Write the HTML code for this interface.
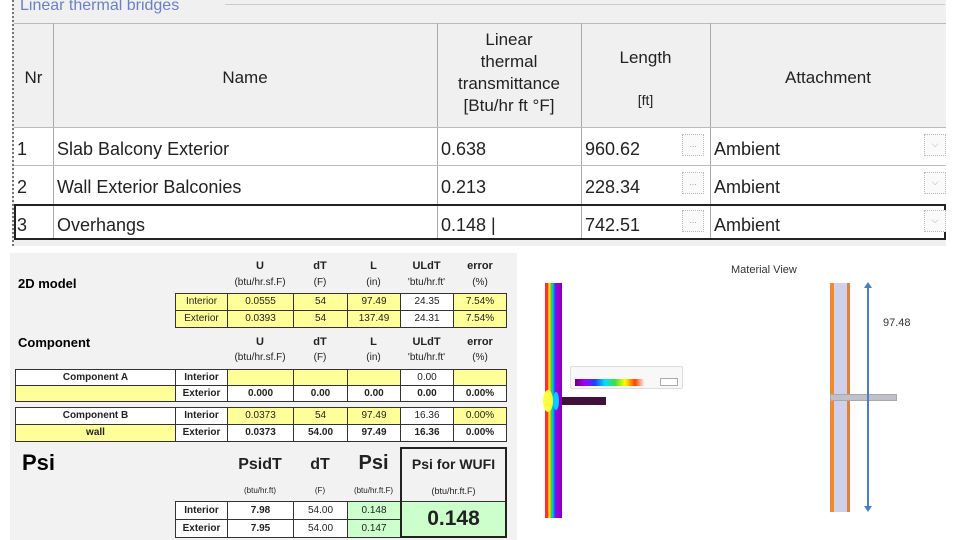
<!DOCTYPE html>
<html><head><meta charset="utf-8"><style>
*{margin:0;padding:0;box-sizing:border-box}
body{width:960px;height:540px;background:#fff;position:relative;overflow:hidden;font-family:"Liberation Sans",Arial,sans-serif}
.a{position:absolute}
.t{color:#222;font-size:18px}
.h{font-size:17px;color:#222;text-align:center;position:absolute;line-height:22px}
.c{position:absolute;border:1px solid #333;font-size:10px;text-align:center;line-height:15px;color:#222}
.y{background:#ffff99}
.w{background:#fff}
.g{background:#ccffcc}
.lb{position:absolute;font-size:10px;text-align:center;color:#222;font-weight:bold}
.un{position:absolute;font-size:10px;text-align:center;color:#222}
.btn{position:absolute;width:22px;height:22px;border:1px dotted #bbb;background:#fafafa;color:#aaa;font-size:9px;text-align:center;line-height:18px}
</style></head><body>
<div class="a" style="left:12px;top:0;width:934px;height:246px;background:#f0f0f0;border-left:2px dotted #777"></div>
<div class="a" style="left:20px;top:-3px;font-size:16px;color:#6a7fc8">Linear thermal bridges</div>
<div class="a" style="left:225px;top:4px;width:720px;height:1px;background:#ccc"></div>
<div class="a" style="left:14px;top:23px;width:932px;height:1px;background:#bbb"></div>
<div class="a" style="left:14px;top:127px;width:932px;height:113px;background:#fff"></div>
<div class="a" style="left:53px;top:23px;width:1px;height:217px;background:#aaa"></div>
<div class="a" style="left:437px;top:23px;width:1px;height:217px;background:#aaa"></div>
<div class="a" style="left:581px;top:23px;width:1px;height:217px;background:#aaa"></div>
<div class="a" style="left:710px;top:23px;width:1px;height:217px;background:#aaa"></div>
<div class="a" style="left:14px;top:127px;width:932px;height:1px;background:#bbb"></div>
<div class="a" style="left:14px;top:165px;width:932px;height:1px;background:#bbb"></div>
<div class="a" style="left:14px;top:204px;width:932px;height:36px;border:2px solid #222"></div>
<div class="h" style="left:14px;top:67px;width:39px">Nr</div>
<div class="h" style="left:53px;top:67px;width:384px">Name</div>
<div class="h" style="left:437px;top:29px;width:144px">Linear<br>thermal<br>transmittance<br>[Btu/hr ft °F]</div>
<div class="h" style="left:581px;top:47px;width:129px">Length</div>
<div class="h" style="left:581px;top:89px;width:129px;font-size:14px">[ft]</div>
<div class="h" style="left:710px;top:67px;width:236px">Attachment</div>
<div class="a t" style="left:17px;top:139px">1</div><div class="a t" style="left:57px;top:139px">Slab Balcony Exterior</div><div class="a t" style="left:441px;top:139px">0.638</div><div class="a t" style="left:585px;top:139px">960.62</div><div class="a t" style="left:714px;top:139px">Ambient</div>
<div class="a t" style="left:17px;top:177px">2</div><div class="a t" style="left:57px;top:177px">Wall Exterior Balconies</div><div class="a t" style="left:441px;top:177px">0.213</div><div class="a t" style="left:585px;top:177px">228.34</div><div class="a t" style="left:714px;top:177px">Ambient</div>
<div class="a t" style="left:17px;top:215px">3</div><div class="a t" style="left:57px;top:215px">Overhangs</div><div class="a t" style="left:441px;top:215px">0.148 |</div><div class="a t" style="left:585px;top:215px">742.51</div><div class="a t" style="left:714px;top:215px">Ambient</div>
<div class="btn" style="left:682px;top:134px">...</div><div class="btn" style="left:682px;top:172px">...</div><div class="btn" style="left:682px;top:210px">...</div>
<div class="btn" style="left:924px;top:134px">⌵</div><div class="btn" style="left:924px;top:172px">⌵</div><div class="btn" style="left:924px;top:210px">⌵</div>

<div class="a" style="left:10px;top:253px;width:507px;height:287px;background:#f2f2f2"></div>
<div class="a" style="left:18px;top:276px;font-size:13px;font-weight:bold">2D model</div>
<div class="a" style="left:18px;top:335px;font-size:13px;font-weight:bold">Component</div>
<div class="lb" style="left:227px;top:260px;width:66px;font-size:11px">U</div><div class="lb" style="left:293px;top:260px;width:54px;font-size:11px">dT</div><div class="lb" style="left:347px;top:260px;width:53px;font-size:11px">L</div><div class="lb" style="left:400px;top:260px;width:53px;font-size:11px">ULdT</div><div class="lb" style="left:453px;top:260px;width:54px;font-size:11px">error</div>
<div class="un" style="left:227px;top:277px;width:66px">(btu/hr.sf.F)</div><div class="un" style="left:293px;top:277px;width:54px">(F)</div><div class="un" style="left:347px;top:277px;width:53px">(in)</div><div class="un" style="left:400px;top:277px;width:53px">'btu/hr.ft'</div><div class="un" style="left:453px;top:277px;width:54px">(%)</div>
<div class="c y" style="left:175px;top:293px;width:53px;height:18px">Interior</div><div class="c y" style="left:227px;top:293px;width:67px;height:18px">0.0555</div><div class="c y" style="left:293px;top:293px;width:55px;height:18px">54</div><div class="c y" style="left:347px;top:293px;width:54px;height:18px">97.49</div><div class="c w" style="left:400px;top:293px;width:54px;height:18px">24.35</div><div class="c y" style="left:453px;top:293px;width:54px;height:18px">7.54%</div>
<div class="c y" style="left:175px;top:310px;width:53px;height:18px">Exterior</div><div class="c y" style="left:227px;top:310px;width:67px;height:18px">0.0393</div><div class="c y" style="left:293px;top:310px;width:55px;height:18px">54</div><div class="c y" style="left:347px;top:310px;width:54px;height:18px">137.49</div><div class="c w" style="left:400px;top:310px;width:54px;height:18px">24.31</div><div class="c y" style="left:453px;top:310px;width:54px;height:18px">7.54%</div>
<div class="lb" style="left:227px;top:336px;width:66px;font-size:11px">U</div><div class="lb" style="left:293px;top:336px;width:54px;font-size:11px">dT</div><div class="lb" style="left:347px;top:336px;width:53px;font-size:11px">L</div><div class="lb" style="left:400px;top:336px;width:53px;font-size:11px">ULdT</div><div class="lb" style="left:453px;top:336px;width:54px;font-size:11px">error</div>
<div class="un" style="left:227px;top:352px;width:66px">(btu/hr.sf.F)</div><div class="un" style="left:293px;top:352px;width:54px">(F)</div><div class="un" style="left:347px;top:352px;width:53px">(in)</div><div class="un" style="left:400px;top:352px;width:53px">'btu/hr.ft'</div><div class="un" style="left:453px;top:352px;width:54px">(%)</div>
<div class="c w" style="left:15px;top:369px;width:161px;height:17px;font-weight:bold">Component A</div><div class="c w" style="left:175px;top:369px;width:53px;height:17px;font-weight:bold">Interior</div><div class="c y" style="left:227px;top:369px;width:67px;height:17px"></div><div class="c y" style="left:293px;top:369px;width:55px;height:17px"></div><div class="c y" style="left:347px;top:369px;width:54px;height:17px"></div><div class="c w" style="left:400px;top:369px;width:54px;height:17px">0.00</div><div class="c y" style="left:453px;top:369px;width:54px;height:17px"></div>
<div class="c y" style="left:15px;top:385px;width:161px;height:17px"></div><div class="c w" style="left:175px;top:385px;width:53px;height:17px;font-weight:bold">Exterior</div><div class="c w" style="left:227px;top:385px;width:67px;height:17px;font-weight:bold">0.000</div><div class="c w" style="left:293px;top:385px;width:55px;height:17px;font-weight:bold">0.00</div><div class="c w" style="left:347px;top:385px;width:54px;height:17px;font-weight:bold">0.00</div><div class="c w" style="left:400px;top:385px;width:54px;height:17px;font-weight:bold">0.00</div><div class="c w" style="left:453px;top:385px;width:54px;height:17px;font-weight:bold">0.00%</div>
<div class="c w" style="left:15px;top:407px;width:161px;height:18px;font-weight:bold">Component B</div><div class="c w" style="left:175px;top:407px;width:53px;height:18px;font-weight:bold">Interior</div><div class="c y" style="left:227px;top:407px;width:67px;height:18px">0.0373</div><div class="c y" style="left:293px;top:407px;width:55px;height:18px">54</div><div class="c y" style="left:347px;top:407px;width:54px;height:18px">97.49</div><div class="c w" style="left:400px;top:407px;width:54px;height:18px">16.36</div><div class="c y" style="left:453px;top:407px;width:54px;height:18px">0.00%</div>
<div class="c y" style="left:15px;top:424px;width:161px;height:18px;font-weight:bold">wall</div><div class="c w" style="left:175px;top:424px;width:53px;height:18px;font-weight:bold">Exterior</div><div class="c w" style="left:227px;top:424px;width:67px;height:18px;font-weight:bold">0.0373</div><div class="c w" style="left:293px;top:424px;width:55px;height:18px;font-weight:bold">54.00</div><div class="c w" style="left:347px;top:424px;width:54px;height:18px;font-weight:bold">97.49</div><div class="c w" style="left:400px;top:424px;width:54px;height:18px;font-weight:bold">16.36</div><div class="c w" style="left:453px;top:424px;width:54px;height:18px;font-weight:bold">0.00%</div>
<div class="a" style="left:22px;top:450px;font-size:22px;font-weight:bold">Psi</div>
<div class="lb" style="left:227px;top:456px;width:66px;font-size:16px">PsidT</div><div class="lb" style="left:293px;top:456px;width:54px;font-size:16px">dT</div><div class="lb" style="left:347px;top:452px;width:53px;font-size:20px">Psi</div>
<div class="un" style="left:227px;top:486px;width:66px;font-size:8px">(btu/hr.ft)</div><div class="un" style="left:293px;top:486px;width:54px;font-size:8px">(F)</div><div class="un" style="left:347px;top:486px;width:53px;font-size:8px">(btu/hr.ft.F)</div>
<div class="c w" style="left:175px;top:501px;width:53px;height:19px;font-weight:bold;line-height:17px">Interior</div><div class="c w" style="left:227px;top:501px;width:67px;height:19px;font-weight:bold;line-height:17px">7.98</div><div class="c w" style="left:293px;top:501px;width:55px;height:19px;line-height:17px">54.00</div><div class="c g" style="left:347px;top:501px;width:54px;height:19px;line-height:17px">0.148</div>
<div class="c w" style="left:175px;top:519px;width:53px;height:19px;font-weight:bold;line-height:17px">Exterior</div><div class="c w" style="left:227px;top:519px;width:67px;height:19px;font-weight:bold;line-height:17px">7.95</div><div class="c w" style="left:293px;top:519px;width:55px;height:19px;line-height:17px">54.00</div><div class="c g" style="left:347px;top:519px;width:54px;height:19px;line-height:17px">0.147</div>
<div class="a" style="left:400px;top:447px;width:107px;height:91px;border:2px solid #222;background:#f2f2f2"></div>
<div class="a g" style="left:402px;top:501px;width:103px;height:35px;border-top:1px solid #333"></div>
<div class="lb" style="left:400px;top:456px;width:107px;font-size:14px">Psi for WUFI</div>
<div class="un" style="left:400px;top:486px;width:107px;font-size:9px">(btu/hr.ft.F)</div>
<div class="lb" style="left:400px;top:507px;width:107px;font-size:21px">0.148</div>

<div class="a" style="left:545px;top:283px;width:17px;height:235px;background:linear-gradient(90deg,#ff3030 0,#ff3030 3px,#ffa000 3px,#ffe000 5px,#40d040 6px,#00c0e0 8px,#2040ff 10px,#a000e0 11px,#8000c0 17px)"></div>
<div class="a" style="left:543px;top:390px;width:10px;height:22px;background:#ffff40;border-radius:50%"></div>
<div class="a" style="left:553px;top:392px;width:6px;height:18px;background:#00d0ff;border-radius:50%"></div>
<div class="a" style="left:562px;top:397px;width:44px;height:8px;background:#40103a"></div>
<div class="a" style="left:570px;top:366px;width:113px;height:23px;background:#f8f8f8;border:1px solid #ddd;border-radius:2px"></div>
<div class="a" style="left:575px;top:379px;width:70px;height:7px;background:linear-gradient(90deg,#700060,#a000ff,#2040ff,#00e0ff,#40e040,#ffff00,#ff4000,#fff)"></div>
<div class="a" style="left:660px;top:378px;width:18px;height:8px;border:1px solid #aaa;background:#fff"></div>
<div class="a" style="left:731px;top:264px;font-size:11px;color:#333">Material View</div>
<div class="a" style="left:830px;top:283px;width:20px;height:229px;background:#d0d0e8;border-left:4px solid #f08a30;border-right:3px solid #e08040"></div>
<div class="a" style="left:830px;top:394px;width:67px;height:7px;background:#c0c0c8;border:1px solid #a8a8b0"></div>
<div class="a" style="left:867px;top:286px;width:2px;height:220px;background:#4a7fc8"></div>
<div class="a" style="left:864px;top:282px;width:0;height:0;border-left:4px solid transparent;border-right:4px solid transparent;border-bottom:6px solid #4a7fc8"></div>
<div class="a" style="left:864px;top:506px;width:0;height:0;border-left:4px solid transparent;border-right:4px solid transparent;border-top:6px solid #4a7fc8"></div>
<div class="a" style="left:883px;top:317px;font-size:11px;color:#333">97.48</div>
</body></html>
